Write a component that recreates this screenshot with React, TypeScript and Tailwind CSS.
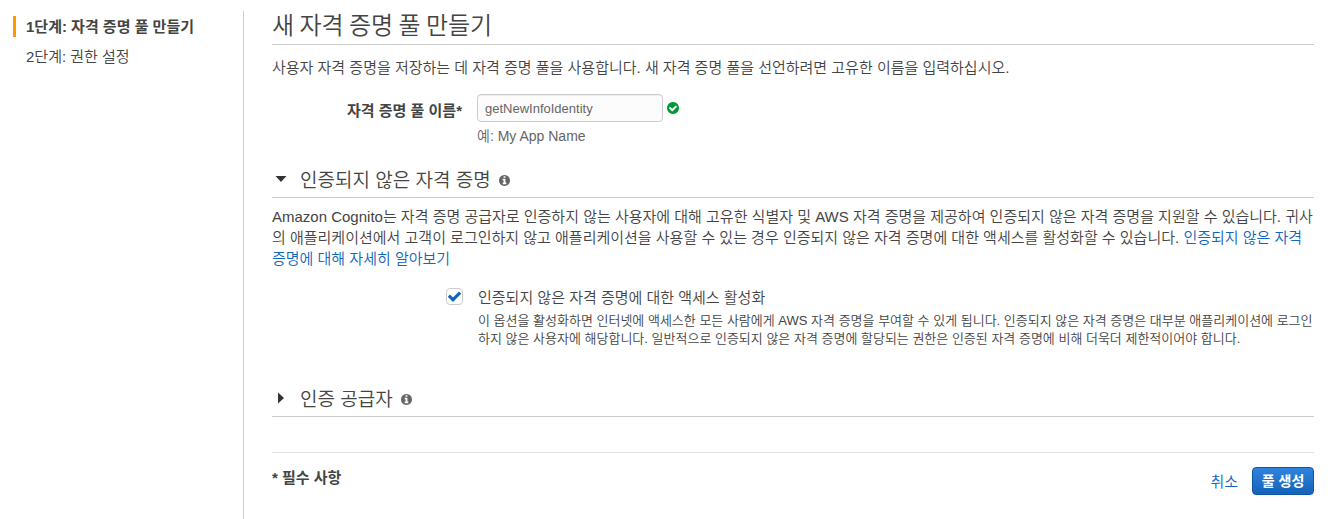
import clsx from 'clsx'
import { ReactNode, useState } from 'react'

const steps = ['1단계: 자격 증명 풀 만들기', '2단계: 권한 설정']

function InfoIcon() {
  return (
    <svg
      className="mb-px ml-2 size-[11px]"
      viewBox="128 128 1536 1536"
      fill="#666"
    >
      <path d="M1152 1376v-160q0-14-9-23t-23-9h-96v-512q0-14-9-23t-23-9h-320q-14 0-23 9t-9 23v160q0 14 9 23t23 9h96v320h-96q-14 0-23 9t-9 23v160q0 14 9 23t23 9h448q14 0 23-9t9-23zm-128-896v-160q0-14-9-23t-23-9h-192q-14 0-23 9t-9 23v160q0 14 9 23t23 9h192q14 0 23-9t9-23zm640 416q0 209-103 385.500t-279.500 279.500-385.500 103-385.500-103-279.500-279.500-103-385.500 103-385.500 279.500-279.500 385.500-103 385.500 103 279.500 279.500 103 385.500z" />
    </svg>
  )
}

function ValidIcon() {
  return (
    <svg className="size-3" viewBox="128 128 1536 1536" fill="#093">
      <path d="M1412 734q0-28-18-46l-91-90q-19-19-45-19t-45 19l-408 407-226-226q-19-19-45-19t-45 19l-91 90q-18 18-18 46 0 27 18 45l362 362q19 19 45 19 27 0 46-19l543-543q18-18 18-45zm252 162q0 209-103 385.500t-279.500 279.500-385.500 103-385.500-103-279.500-279.500-103-385.500 103-385.500 279.500-279.500 385.500-103 385.500 103 279.500 279.500 103 385.500z" />
    </svg>
  )
}

function StepList({ current }: { current: number }) {
  return (
    <nav className="w-[244px] shrink-0 border-r border-[#ccc] pt-[5px] pl-[13px]">
      <ol className="flex flex-col gap-[9px]">
        {steps.map((step, index) => (
          <li
            key={step}
            aria-current={index === current ? 'step' : undefined}
            className={clsx(
              'border-l-3 pl-[10px] leading-[21px]',
              index === current
                ? 'border-[#f90] font-bold'
                : 'border-transparent',
            )}
          >
            {step}
          </li>
        ))}
      </ol>
    </nav>
  )
}

type SectionProps = {
  title: string
  defaultOpen?: boolean
  children?: ReactNode
}

function Section({ title, defaultOpen = false, children }: SectionProps) {
  const [open, setOpen] = useState(defaultOpen)

  return (
    <section>
      <h2 className="border-b border-[#ccc] pb-[3px] text-[19px]/[27px] font-[350]">
        <button
          type="button"
          className="flex cursor-pointer items-center"
          aria-expanded={open}
          onClick={() => setOpen(!open)}
        >
          <span className="mb-1 flex w-7 pl-[3px]">
            <svg width="12" height="12" viewBox="0 0 12 12" fill="#333">
              {open ? (
                <path d="M0.5 3h11L6 9z" />
              ) : (
                <path d="M3 0.5v11L9 6z" />
              )}
            </svg>
          </span>
          {title}
          <InfoIcon />
        </button>
      </h2>
      {open && children}
    </section>
  )
}

export default function App() {
  const [name, setName] = useState('getNewInfoIdentity')
  const [allowGuests, setAllowGuests] = useState(true)

  return (
    <div className="flex min-h-screen bg-white pt-[11px] font-['Liberation_Sans','Noto_Sans_CJK_KR',sans-serif] text-[15px]/[21px] font-[350] text-[#444]">
      <StepList current={0} />

      <main className="flex-1 pr-[27px] pb-6 pl-7">
        <h1 className="border-b border-[#ccc] pb-[7px] font-['Noto_Sans_CJK_KR',sans-serif] text-2xl/[26px] font-[350]">
          새 자격 증명 풀 만들기
        </h1>
        <p className="mt-3">
          사용자 자격 증명을 저장하는 데 자격 증명 풀을 사용합니다. 새 자격 증명
          풀을 선언하려면 고유한 이름을 입력하십시오.
        </p>

        <form onSubmit={(e) => e.preventDefault()}>
          {/* Pool name */}
          <div className="mt-4 mb-5 flex">
            <label
              htmlFor="pool-name"
              className="w-[190px] pt-1.5 text-right font-bold"
            >
              자격 증명 풀 이름*
            </label>
            <div className="ml-[15px]">
              <div className="flex items-center gap-1">
                <input
                  id="pool-name"
                  type="text"
                  aria-describedby="pool-name-hint"
                  className="h-7 w-[186px] rounded-sm border border-[#ccc] bg-[#fcfcfc] px-[7px] text-[13px] text-[#666] inset-shadow-2xs"
                  value={name}
                  onChange={(e) => setName(e.target.value)}
                />
                {name && <ValidIcon />}
              </div>
              <p
                id="pool-name-hint"
                className="mt-1 text-sm/[21px] text-[#666]"
              >
                예: My App Name
              </p>
            </div>
          </div>

          <Section title="인증되지 않은 자격 증명" defaultOpen>
            <p className="mt-2">
              Amazon Cognito는 자격 증명 공급자로 인증하지 않는 사용자에 대해
              고유한 식별자 및 AWS 자격 증명을 제공하여 인증되지 않은 자격 증명을
              지원할 수 있습니다. 귀사의 애플리케이션에서 고객이 로그인하지 않고
              애플리케이션을 사용할 수 있는 경우 인증되지 않은 자격 증명에 대한
              액세스를 활성화할 수 있습니다.{' '}
              <a href="#" className="text-[#1166bb] hover:underline">
                인증되지 않은 자격 증명에 대해 자세히 알아보기
              </a>
            </p>

            <div className="mt-[18px] flex gap-[15px] pl-[174px]">
              <span className="relative mt-px size-[17px] shrink-0">
                <input
                  id="allow-guests"
                  type="checkbox"
                  className="block size-full appearance-none rounded-sm border border-[#ccc] bg-white"
                  checked={allowGuests}
                  onChange={(e) => setAllowGuests(e.target.checked)}
                />
                {allowGuests && (
                  <svg
                    className="pointer-events-none absolute top-px left-px size-[15px]"
                    viewBox="0 0 1792 1792"
                    fill="#1166bb"
                  >
                    <path d="M1671 566q0 40-28 68l-724 724-136 136q-28 28-68 28t-68-28l-136-136-362-362q-28-28-28-68t28-68l136-136q28-28 68-28t68 28l294 295 656-657q28-28 68-28t68 28l136 136q28 28 28 68z" />
                  </svg>
                )}
              </span>
              <div>
                <label htmlFor="allow-guests">
                  인증되지 않은 자격 증명에 대한 액세스 활성화
                </label>
                <p className="mt-1 text-[13px]/[18px]">
                  이 옵션을 활성화하면 인터넷에 액세스한 모든 사람에게 AWS 자격
                  증명을 부여할 수 있게 됩니다. 인증되지 않은 자격 증명은 대부분
                  애플리케이션에 로그인하지 않은 사용자에 해당합니다. 일반적으로
                  인증되지 않은 자격 증명에 할당되는 권한은 인증된 자격 증명에
                  비해 더욱더 제한적이어야 합니다.
                </p>
              </div>
            </div>
          </Section>

          <div className="mt-[38px]">
            <Section title="인증 공급자" />
          </div>

          <footer className="mt-[35px] flex justify-between border-t border-[#ddd] pt-[14px]">
            <p className="font-bold">* 필수 사항</p>
            <div className="flex items-center gap-[14px]">
              <a href="#" className="text-[#1166bb] hover:underline">
                취소
              </a>
              <button
                type="submit"
                className="h-7 w-[62px] rounded-sm border border-[#0d56a5] bg-linear-to-b from-[#2f83de] to-[#1463b8] text-sm font-bold whitespace-nowrap text-white"
              >
                풀 생성
              </button>
            </div>
          </footer>
        </form>
      </main>
    </div>
  )
}
